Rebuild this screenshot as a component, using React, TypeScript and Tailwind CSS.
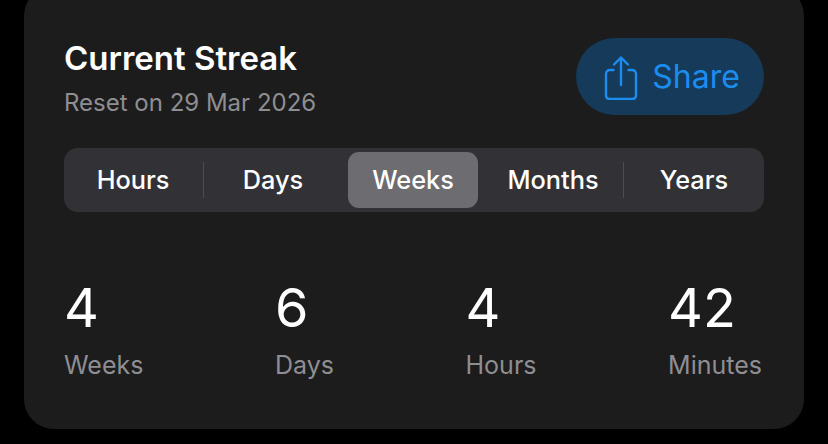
const font = { fontFamily: 'Inter, sans-serif' }

const segments = ['Hours', 'Days', 'Weeks', 'Months', 'Years']

const stats = [
  { value: '4', label: 'Weeks' },
  { value: '6', label: 'Days' },
  { value: '4', label: 'Hours' },
  { value: '42', label: 'Minutes' },
]

function ShareIcon() {
  return (
    <svg width="36" height="46" viewBox="0 0 36 46" fill="none" stroke="#1b8df0" strokeWidth="2.4" strokeLinecap="round" strokeLinejoin="round">
      <path d="M10.5 16H7C4.5 16 3 17.5 3 20V41C3 43.5 4.5 45 7 45H29C31.5 45 33 43.5 33 41V20C33 17.5 31.5 16 29 16H25.5" />
      <path d="M18 31V4" />
      <path d="M11 10.5L18 3.5L25 10.5" />
    </svg>
  )
}

export default function App() {
  return (
    <div className="h-[444px] w-[828px] overflow-hidden bg-black px-6 pb-[15px]" style={font}>
      <div className="mt-[-14px] flex h-[443px] flex-col rounded-[30px] bg-[#1c1c1c] px-10 pt-[52px]">
        <div className="flex h-[77px] items-start justify-between">
          <div>
            <h1 className="text-[33px] leading-[40px] font-semibold text-white">Current Streak</h1>
            <p className="mt-[13px] text-[24px] leading-[24px] text-[#8e8e93]">Reset on 29 Mar 2026</p>
          </div>
          <button type="button" className="flex h-[77px] w-[188px] items-center justify-center gap-[13px] rounded-full bg-[#163a5a] pl-[3px] text-[32px] text-[#1b8df0]">
            <ShareIcon />
            Share
          </button>
        </div>

        <div className="mt-[33px] grid h-16 grid-cols-5 rounded-[14px] bg-[#323236]">
          {segments.map((name, i) => (
            <div key={name} className={`relative flex items-center justify-center ${i < 4 ? 'pr-[2px]' : ''}`}>
              {name === 'Weeks' ? (
                <span className="flex h-14 w-[130px] items-center justify-center rounded-[11px] bg-[#6c6c71] text-[25.3px] font-medium text-white">{name}</span>
              ) : (
                <span className="text-[25.3px] font-medium text-white">{name}</span>
              )}
              {(i === 0 || i === 3) && <span className="absolute top-[14px] right-0 h-9 w-px bg-[#4c4c51]" />}
            </div>
          ))}
        </div>

        <div className="mt-[66px] flex justify-between pr-[2px]">
          {stats.map((s, i) => (
            <div key={i} className="flex flex-col">
              <span className="text-[54px] leading-[60px] text-white">{s.value}</span>
              <span className="mt-[11px] text-[25px] leading-[32px] text-[#8e8e93]">{s.label}</span>
            </div>
          ))}
        </div>
      </div>
    </div>
  )
}
